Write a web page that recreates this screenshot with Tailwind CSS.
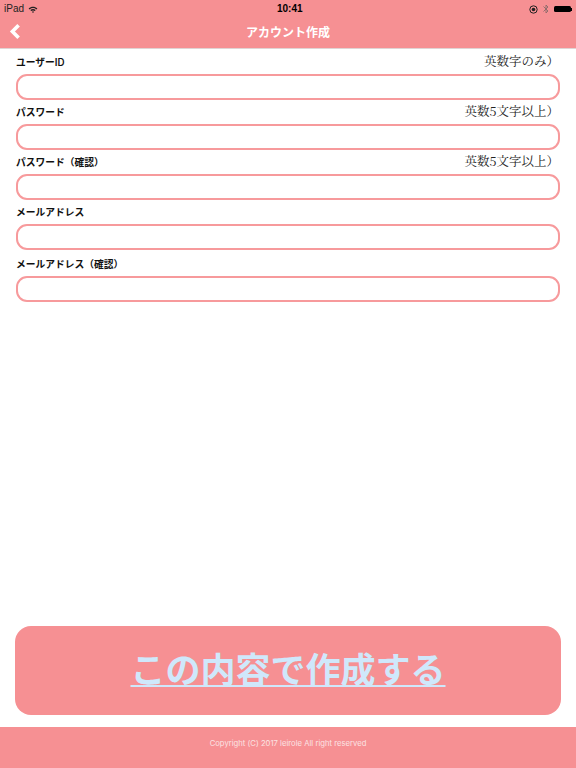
<!DOCTYPE html>
<html lang="ja">
<head>
    <meta charset="UTF-8">
    <meta name="viewport" content="width=device-width, initial-scale=1.0">
    <title>アカウント作成</title>
    <script src="https://cdn.jsdelivr.net/npm/@tailwindcss/browser@4"></script>
</head>
<body class="bg-white">
<div class="flex flex-col h-[768px] w-[576px] overflow-hidden font-['Inter','Noto_Sans_CJK_JP',sans-serif]">
    <!-- Header -->
    <header class="h-[49px] shrink-0 bg-[#f69093] border-b border-[#e0d4d4] text-white">
        <div class="h-[16px] pt-[2px] pl-[4px] pr-[4px] flex items-center justify-between relative text-black">
            <div class="flex items-center gap-[4px]">
                <span class="text-[10px] leading-[14px] text-[#222] font-['Liberation_Sans',sans-serif]">iPad</span>
                <svg width="10" height="7" viewBox="0 0 11 8"><path d="M0.5 2.8C3.4 0.1 7.6 0.1 10.5 2.8L9.4 3.9C7.1 1.9 3.9 1.9 1.6 3.9Z M2.4 4.7C4.2 3.1 6.8 3.1 8.6 4.7L7.5 5.8C6.3 4.8 4.7 4.8 3.5 5.8Z M4.2 6.6C4.9 6 6.1 6 6.8 6.6L5.5 8Z" fill="#222"/></svg>
            </div>
            <span class="absolute left-[277px] top-[1px] text-[10px] leading-[16px] font-semibold font-['Liberation_Sans',sans-serif]">10:41</span>
            <div class="flex items-center gap-[5px]">
                <svg width="9" height="9" viewBox="0 0 9 9"><circle cx="4.5" cy="4.5" r="3.7" fill="none" stroke="#222" stroke-width="1"/><circle cx="4.5" cy="4.5" r="1.8" fill="#222"/></svg>
                <svg width="6" height="10" viewBox="0 0 6 10"><path d="M0.5 2.5L5 7L3 9V1L5 3L0.5 7.5" fill="none" stroke="#8a6a6a" stroke-width="0.9"/></svg>
                <div class="flex items-center">
                    <div class="w-[17px] h-[6px] bg-black rounded-[1.5px]"></div>
                    <div class="w-[1.5px] h-[3px] bg-black"></div>
                </div>
            </div>
        </div>
        <div class="h-[32px] flex items-center relative">
            <svg class="absolute left-[9px] top-[7px]" width="12" height="17" viewBox="0 0 12 17"><path d="M9.6 2.2L3.4 8.5L9.6 14.8" fill="none" stroke="#fff" stroke-width="3.6"/></svg>
            <h1 class="w-full text-center text-[12px] font-semibold leading-[32px] pt-[1px]">アカウント作成</h1>
        </div>
    </header>

    <!-- Form -->
    <main class="flex-1 px-[16px] flex flex-col">
        <div class="mt-[3px]">
            <div class="flex items-center justify-between h-[22px] pr-[1px]">
                <label class="text-[9.75px] font-semibold text-[#111]">ユーザーID</label>
                <span class="text-[12.5px] text-[#222] -mt-[3px] font-['Noto_Serif_CJK_JP','Liberation_Serif','Noto_Sans_CJK_JP',serif]">英数字のみ）</span>
            </div>
            <input type="text" class="block w-full h-[26px] border-2 border-[#f79a9c] rounded-[11px] bg-white">
        </div>
        <div class="mt-[1px]">
            <div class="flex items-center justify-between h-[23px] pr-[1px]">
                <label class="text-[9.75px] font-semibold text-[#111] mt-[2px]">パスワード</label>
                <span class="text-[12.5px] text-[#222] -mt-[3px] font-['Noto_Serif_CJK_JP','Liberation_Serif','Noto_Sans_CJK_JP',serif]">英数5文字以上）</span>
            </div>
            <input type="password" class="block w-full h-[26px] border-2 border-[#f79a9c] rounded-[11px] bg-white">
        </div>
        <div class="mt-[1px]">
            <div class="flex items-center justify-between h-[23px] pr-[1px]">
                <label class="text-[9.75px] font-semibold text-[#111] mt-[2px]">パスワード（確認）</label>
                <span class="text-[12.5px] text-[#222] -mt-[3px] font-['Noto_Serif_CJK_JP','Liberation_Serif','Noto_Sans_CJK_JP',serif]">英数5文字以上）</span>
            </div>
            <input type="password" class="block w-full h-[26px] border-2 border-[#f79a9c] rounded-[11px] bg-white">
        </div>
        <div class="mt-[1px]">
            <div class="flex items-center h-[23px]">
                <label class="text-[9.75px] font-semibold text-[#111] mt-[2px]">メールアドレス</label>
            </div>
            <input type="email" class="block w-full h-[26px] border-2 border-[#f79a9c] rounded-[11px] bg-white">
        </div>
        <div class="mt-[1px]">
            <div class="flex items-center h-[25px]">
                <label class="text-[9.75px] font-semibold text-[#111] mt-[4px]">メールアドレス（確認）</label>
            </div>
            <input type="email" class="block w-full h-[26px] border-2 border-[#f79a9c] rounded-[11px] bg-white">
        </div>
        <div class="mt-auto mb-[12px] -mx-[1px]">
            <a class="flex items-center justify-center h-[89px] rounded-[16px] bg-[#f69093] text-[#cfe8fb] text-[35px] font-semibold underline decoration-[1.5px] underline-offset-[2px]">この内容で作成する</a>
        </div>
    </main>

    <!-- Footer -->
    <footer class="h-[41px] shrink-0 bg-[#f69093] flex items-center justify-center pb-[7px]">
        <p class="text-[7.7px] text-[#fbe3e3]">Copyright (C) 2017 leirole All right reserved</p>
    </footer>
</div>
</body>
</html>
